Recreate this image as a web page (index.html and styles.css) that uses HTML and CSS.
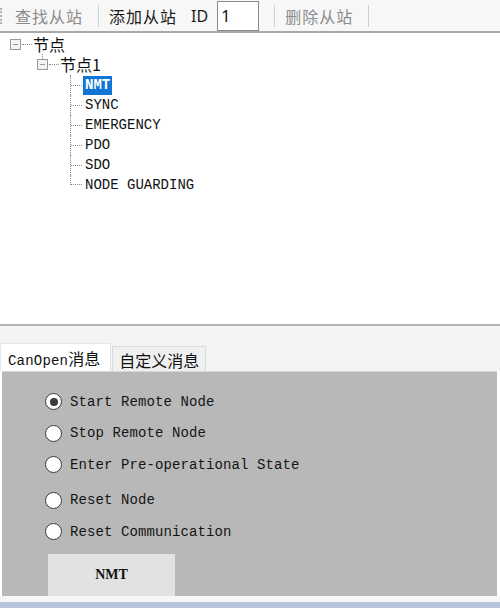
FILE: index.html
```html
<!DOCTYPE html>
<html>
<head>
<meta charset="utf-8">
<link rel="stylesheet" href="styles.css">
</head>
<body>
<div class="app">
  <div class="toolbar">
    <span class="grip"></span>
    <span class="tb-btn disabled">查找从站</span>
    <span class="sep"></span>
    <span class="tb-btn">添加从站</span>
    <span class="tb-label">ID</span>
    <span class="tb-input">1</span>
    <span class="sep"></span>
    <span class="tb-btn disabled">删除从站</span>
    <span class="sep"></span>
  </div>

  <div class="tree">
    <div class="node root">
      <span class="expander"></span><span class="hdash"></span><span class="cn">节点</span>
    </div>
    <div class="node lvl2">
      <span class="expander"></span><span class="hdash"></span><span class="cn">节点1</span>
    </div>
    <div class="children">
      <div class="leaf"><span class="conn"></span><span class="lbl selected">NMT</span></div>
      <div class="leaf"><span class="conn"></span><span class="lbl">SYNC</span></div>
      <div class="leaf"><span class="conn"></span><span class="lbl">EMERGENCY</span></div>
      <div class="leaf"><span class="conn"></span><span class="lbl">PDO</span></div>
      <div class="leaf"><span class="conn"></span><span class="lbl">SDO</span></div>
      <div class="leaf last"><span class="conn"></span><span class="lbl">NODE GUARDING</span></div>
    </div>
  </div>

  <div class="tabstrip">
    <div class="tab active"><span class="mono">CanOpen</span>消息</div>
    <div class="tab">自定义消息</div>
  </div>

  <div class="panel">
    <div class="radios">
      <div class="radio checked"><span class="dot"></span><span class="rl">Start Remote Node</span></div>
      <div class="radio"><span class="dot"></span><span class="rl">Stop Remote Node</span></div>
      <div class="radio"><span class="dot"></span><span class="rl">Enter Pre-operational State</span></div>
      <div class="radio gap"><span class="dot"></span><span class="rl">Reset Node</span></div>
      <div class="radio"><span class="dot"></span><span class="rl">Reset Communication</span></div>
    </div>
    <div class="btn">NMT</div>
  </div>

  <div class="footer"></div>
</div>
</body>
</html>
```

FILE: styles.css
```css
* { box-sizing: border-box; }
html, body { margin: 0; padding: 0; }
body {
  width: 500px;
  height: 608px;
  overflow: hidden;
  background: #ffffff;
  font-family: "Noto Sans CJK SC", "Noto Sans", sans-serif;
}
.app {
  display: flex;
  flex-direction: column;
  width: 500px;
  height: 608px;
}

/* toolbar */
.toolbar {
  height: 33px;
  flex: none;
  display: flex;
  align-items: center;
  background: #f7f7f7;
  border-bottom: 2px solid #a9a9a9;
}
.grip {
  width: 3px;
  height: 16px;
  margin-right: 12px;
  border-left: 2px dotted #b5b5b5;
}
.tb-btn {
  font-size: 16px;
  line-height: 20px;
  color: #1a1a1a;
  letter-spacing: 1px;
}
.tb-btn.disabled { color: #8c8c8c; }
.sep {
  width: 1px;
  height: 22px;
  background: #cfcfcf;
  margin: 0 10px 0 15px;
}
.tb-label {
  font-family: "Noto Sans", sans-serif;
  font-size: 16px;
  color: #1a1a1a;
  margin-left: 14px;
  margin-right: 9px;
}
.tb-input {
  width: 42px;
  height: 30px;
  background: #ffffff;
  border: 1px solid #8a8a8a;
  font-family: "Noto Sans", sans-serif;
  font-size: 16px;
  line-height: 28px;
  padding-left: 3px;
  color: #111;
}

/* tree */
.tree {
  height: 293px;
  flex: none;
  background: #ffffff;
  border-bottom: 2px solid #b3b3b3;
  padding-top: 1px;
}
.node {
  display: flex;
  align-items: center;
  height: 20px;
}
.root { padding-left: 10px; }
.lvl2 {
  padding-left: 37px;
  background: repeating-linear-gradient(to bottom, #8a8a8a 0 1px, transparent 1px 2px) 42px 0 / 1px 8px no-repeat;
}
.expander {
  width: 11px;
  height: 11px;
  border: 1px solid #9a9a9a;
  background: linear-gradient(#9a9a9a, #9a9a9a) center / 5px 1px no-repeat, #f4f4f4;
  flex: none;
}
.hdash {
  width: 10px;
  border-top: 1px dotted #8a8a8a;
  margin: 0 1px;
}
.cn {
  font-size: 16px;
  line-height: 20px;
  color: #111;
}
.children {
  padding-left: 70px;
  margin-top: 1px;
}
.leaf {
  display: flex;
  align-items: center;
  height: 20px;
}
.conn {
  align-self: stretch;
  width: 12px;
  margin-right: 1px;
  border-left: 1px dotted #8a8a8a;
  background: linear-gradient(to right, #8a8a8a 50%, transparent 50%) 0 50% / 2px 1px repeat-x;
}
.leaf.last .conn {
  align-self: flex-start;
  height: 50%;
  background: linear-gradient(to right, #8a8a8a 50%, transparent 50%) 0 100% / 2px 1px repeat-x;
}
.lbl {
  font-family: "Liberation Mono", "DejaVu Sans Mono", monospace;
  font-size: 14px;
  line-height: 19px;
  color: #111;
  padding: 0 2px;
}
.lbl.selected {
  background: #0f76d6;
  color: #ffffff;
  font-weight: bold;
}

/* tabs */
.tabstrip {
  height: 45px;
  flex: none;
  background: #f4f4f4;
  display: flex;
  align-items: flex-end;
}
.tab {
  font-size: 16px;
  line-height: 20px;
  color: #111;
  padding: 3px 6px 4px 6px;
  background: #f0f0f0;
  border: 1px solid #dcdcdc;
  border-bottom: none;
  height: 25px;
}
.tab.active {
  background: #ffffff;
  height: 28px;
  padding: 4px 10px 4px 7px;
  border-color: #e6e6e6;
  margin-right: 1px;
}
.mono {
  font-family: "Liberation Mono", "DejaVu Sans Mono", monospace;
  font-size: 14px;
  letter-spacing: 0.2px;
}

/* panel */
.panel {
  flex: none;
  height: 225px;
  margin: 0 3px 0 2px;
  background: #b8b8b8;
  border-top: 1px solid #d6d6d6;
  display: flex;
  flex-direction: column;
}
.radios {
  padding: 14px 0 0 43px;
  display: flex;
  flex-direction: column;
}
.radio {
  display: flex;
  align-items: center;
  height: 31.5px;
}
.radio.gap { margin-top: 4px; }
.dot {
  width: 17px;
  height: 17px;
  border-radius: 50%;
  background: #ffffff;
  border: 1.5px solid #3a3a3a;
  margin-right: 8px;
  flex: none;
  display: flex;
  align-items: center;
  justify-content: center;
}
.radio.checked .dot::after {
  content: "";
  width: 8px;
  height: 8px;
  border-radius: 50%;
  background: #3a3a3a;
}
.rl {
  font-family: "Liberation Mono", "DejaVu Sans Mono", monospace;
  font-size: 14px;
  color: #151515;
  letter-spacing: 0.1px;
}
.btn {
  margin: 6px 0 0 46px;
  width: 127px;
  flex: 1;
  background: #e2e2e2;
  display: flex;
  align-items: center;
  justify-content: center;
  font-family: "Liberation Serif", serif;
  font-weight: bold;
  font-size: 14px;
  color: #111;
}

/* footer */
.footer {
  flex: 1;
  background: linear-gradient(#f6f6f6 0, #f6f6f6 6px, #b7c5dc 6px);
}
```
